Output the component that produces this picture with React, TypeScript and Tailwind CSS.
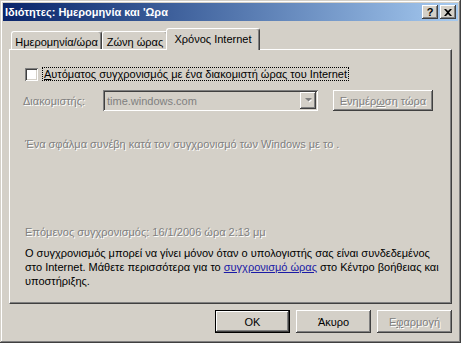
const raised =
  'bg-[#d4d0c8] shadow-[inset_-1px_-1px_#404040,inset_1px_1px_#ffffff,inset_-2px_-2px_#808080,inset_2px_2px_#d4d0c8]';
const sunken =
  'shadow-[inset_1px_1px_#808080,inset_-1px_-1px_#ffffff,inset_2px_2px_#404040,inset_-2px_-2px_#d4d0c8]';
const disabledText = 'text-[#808080] [text-shadow:1px_1px_0_#ffffff]';

function TitleButton({ children }: { children: React.ReactNode }) {
  return (
    <div className={`${raised} w-[16px] h-[14px] flex items-center justify-center text-[11px] font-bold text-black leading-none`}>
      {children}
    </div>
  );
}

function TitleBar() {
  return (
    <div className="h-[18px] flex items-center justify-between bg-gradient-to-r from-[#0a246a] to-[#a6caf0] pl-[2px] pr-[2px]">
      <span className="text-white font-bold text-[11px] leading-none">Ιδιότητες: Ημερομηνία και 'Ωρα</span>
      <div className="flex gap-[2px]">
        <TitleButton>?</TitleButton>
        <TitleButton>
          <svg width="8" height="7" viewBox="0 0 8 7">
            <path d="M0 0h2l2 2 2-2h2L5 3.5 8 7H6L4 5 2 7H0l3-3.5z" fill="#000" />
          </svg>
        </TitleButton>
      </div>
    </div>
  );
}

const tabFrame =
  'bg-[#d4d0c8] border-t border-l border-white border-r border-r-[#404040] rounded-t-[3px] shadow-[inset_-1px_0_#808080] text-center';

function Tab({ label, width, active }: { label: string; width: string; active?: boolean }) {
  if (active) {
    return (
      <div className={`relative z-10 -ml-[2px] mb-[-1px] h-[22px] pt-[3px] ${width} ${tabFrame}`}>
        {label}
      </div>
    );
  }
  return <div className={`h-[18px] pt-[3px] ${width} ${tabFrame}`}>{label}</div>;
}

function Button({ label, def, disabled }: { label: React.ReactNode; def?: boolean; disabled?: boolean }) {
  return (
    <div
      className={`w-[75px] h-[23px] flex items-center justify-center ${
        def
          ? 'bg-[#d4d0c8] shadow-[inset_0_0_0_1px_#000000,inset_-2px_-2px_#404040,inset_2px_2px_#ffffff,inset_-3px_-3px_#808080]'
          : raised
      } ${disabled ? disabledText : 'text-black'}`}
    >
      {label}
    </div>
  );
}

export default function App() {
  return (
    <div className="w-[461px] h-[343px] p-[3px] bg-[#d4d0c8] flex flex-col text-[11px] leading-[14px] text-black font-['Liberation_Sans','Noto_Sans',sans-serif] shadow-[inset_-1px_-1px_#404040,inset_1px_1px_#d4d0c8,inset_-2px_-2px_#808080,inset_2px_2px_#ffffff]">
      <TitleBar />

      <div className="px-[6px]">
        <div className="h-[28px] flex items-end pl-[2px]">
          <Tab label="Ημερομηνία/ώρα" width="w-[91px]" />
          <Tab label="Ζώνη ώρας" width="w-[66px]" />
          <Tab label="Χρόνος Internet" width="w-[94px]" active />
        </div>

        <div className="h-[255px] flex flex-col border-t border-l border-white border-r border-b border-r-[#404040] border-b-[#404040] shadow-[inset_-1px_-1px_#808080] pl-[15px]">
          <div className="mt-[17px] h-[14px] flex items-center">
            <div className={`w-[13px] h-[13px] bg-white ${sunken}`} />
            <span className="ml-[4px] px-[1px] h-[14px] border border-dotted border-black leading-[12px]">
              <span className="underline">Α</span>υτόματος συγχρονισμός με ένα διακομιστή ώρας του Internet
            </span>
          </div>

          <div className="mt-[9px] h-[21px] flex items-center -ml-[2px]">
            <span className={`w-[80px] ${disabledText}`}>Διακομιστής:</span>
            <div className={`w-[215px] h-[21px] bg-[#d4d0c8] ${sunken} flex items-center justify-between pl-[4px] pr-[2px]`}>
              <span className="text-[#808080]">time.windows.com</span>
              <div className={`${raised} w-[16px] h-[17px] flex items-center justify-center`}>
                <svg width="7" height="5" viewBox="0 0 7 5">
                  <path d="M1 1h5L3.5 3.5z" fill="#ffffff" transform="translate(1 1)" />
                  <path d="M0 0h7L3.5 3.5z" fill="#808080" />
                </svg>
              </div>
            </div>
            <div className={`${raised} ml-[15px] w-[100px] h-[21px] flex items-center justify-center ${disabledText}`}>
              Ενημέρ<span className="underline">ω</span>ση τώρα
            </div>
          </div>

          <div className={`mt-[26px] ${disabledText}`}>
            Ένα σφάλμα συνέβη κατά τον συγχρονισμό των Windows με το .
          </div>

          <div className={`mt-[74px] ${disabledText}`}>
            Επόμενος συγχρονισμός: 16/1/2006 ώρα 2:13 μμ
          </div>

          <p className="mt-[7px] whitespace-nowrap">
            Ο συγχρονισμός μπορεί να γίνει μόνον όταν ο υπολογιστής σας είναι συνδεδεμένος
            <br />
            στο Internet. Μάθετε περισσότερα για το <span className="underline text-[#1a1aa6]">συγχρονισμό ώρας</span> στο
            Κέντρο βοήθειας και
            <br />
            υποστήριξης.
          </p>
        </div>
      </div>

      <div className="mt-[6px] h-[23px] flex justify-end gap-[6px] pr-[6px]">
        <Button label="OK" def />
        <Button label="Άκυρο" />
        <Button
          label={
            <>
              Ε<span className="underline">φ</span>αρμογή
            </>
          }
          disabled
        />
      </div>
    </div>
  );
}
